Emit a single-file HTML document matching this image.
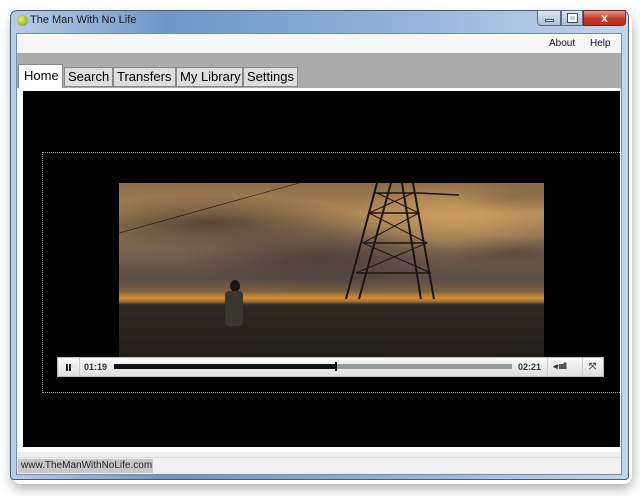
<!DOCTYPE html>
<html><head><style>
*{margin:0;padding:0;box-sizing:border-box}
body{width:640px;height:496px;background:#fff;position:relative;overflow:hidden;font-family:"Liberation Sans",sans-serif}
.abs{position:absolute}
</style></head><body>
<div class="abs" style="left:12px;top:14px;width:620px;height:470px;border-radius:8px;box-shadow:0 4px 12px rgba(0,0,0,0.35)"></div>
<div class="abs" style="left:10px;top:10px;width:619px;height:470px;border-radius:7px 7px 4px 4px;border:1px solid #4a5a70;background:linear-gradient(90deg,#b8cde6 0%,#6f96c8 25%,#8fb0d8 60%,#c2d5ea 100%)"></div>
<div class="abs" style="left:30px;top:14px;font-size:11px;color:#1a1a1a">The Man With No Life</div>
<div class="abs" style="left:17px;top:15px;width:11px;height:11px;border-radius:50%;background:radial-gradient(circle at 40% 40%,#e8f060,#6a9a10)"></div>
<div class="abs" style="left:537px;top:10px;width:24px;height:16px;border:1px solid #5a6d88;border-radius:0 0 0 4px;background:linear-gradient(#dbe6f3,#a9bdd8)"><div class="abs" style="left:7px;top:8px;width:9px;height:3px;background:#fff;border:1px solid #445"></div></div>
<div class="abs" style="left:561px;top:10px;width:22px;height:16px;border:1px solid #5a6d88;background:linear-gradient(#dbe6f3,#a9bdd8)"><div class="abs" style="left:6px;top:3px;width:9px;height:8px;border:2px solid #fff;outline:1px solid #445"></div></div>
<div class="abs" style="left:583px;top:10px;width:43px;height:16px;border:1px solid #6a2a20;border-radius:0 0 4px 0;background:linear-gradient(#e89a88,#c8402a 50%,#b82a18);color:#fff;font-size:12px;font-weight:bold;text-align:center;line-height:14px">x</div>
<div class="abs" style="left:16px;top:33px;width:606px;height:442px;background:#efefef;border:1px solid #7a8aa0"></div>
<div class="abs" style="left:17px;top:34px;width:604px;height:19px;background:#f7f7f7;font-size:10px;color:#111"><span class="abs" style="left:532px;top:4px">About</span><span class="abs" style="left:573px;top:4px">Help</span></div>
<div class="abs" style="left:17px;top:53px;width:604px;height:35px;background:#ababab"></div>
<div class="abs" style="left:18px;top:64px;width:45px;height:25px;background:#fff;border:1px solid #888;border-bottom:none;font-size:13px;padding:3px 0 0 5px">Home</div>
<div class="abs" style="left:64px;top:67px;width:49px;height:20px;background:#dedede;border:1px solid #888;font-size:13px;padding:1px 0 0 3px">Search</div>
<div class="abs" style="left:113px;top:67px;width:63px;height:20px;background:#dedede;border:1px solid #888;font-size:13px;padding:1px 0 0 3px">Transfers</div>
<div class="abs" style="left:176px;top:67px;width:67px;height:20px;background:#dedede;border:1px solid #888;font-size:13px;padding:1px 0 0 3px">My Library</div>
<div class="abs" style="left:243px;top:67px;width:55px;height:20px;background:#dedede;border:1px solid #888;font-size:13px;padding:1px 0 0 3px">Settings</div>
<div class="abs" style="left:17px;top:88px;width:604px;height:364px;background:#fff"></div>
<div class="abs" style="left:23px;top:91px;width:597px;height:356px;background:#000"></div>
<div class="abs" style="left:42px;top:152px;width:580px;height:241px;border:1px dotted #aaa"></div>
<div class="abs" style="left:119px;top:183px;width:425px;height:174px;overflow:hidden;background:linear-gradient(#8a6a48 0%,#b08a58 18%,#7a6450 38%,#5a4e48 55%,#7a6040 62%,#d09030 66%,#a87030 68%,#2e2a22 70%,#221e18 100%)">
<div class="abs" style="left:0;top:0;width:425px;height:116px;background:radial-gradient(ellipse 160px 28px at 90px 40px,rgba(60,48,45,.75),transparent),radial-gradient(ellipse 140px 35px at 200px 75px,rgba(55,45,45,.6),transparent),radial-gradient(ellipse 110px 40px at 340px 35px,rgba(225,175,95,.6),transparent),radial-gradient(ellipse 80px 18px at 390px 70px,rgba(80,60,50,.6),transparent),radial-gradient(ellipse 60px 15px at 390px 15px,rgba(90,70,55,.5),transparent)"></div>
<svg class="abs" style="left:0;top:0" width="425" height="174" stroke="#1a1412" fill="none" stroke-width="2">
<path d="M227 116 L258 0 M315 116 L294 0 M240 116 L272 0 M302 116 L283 0"/>
<path d="M250 30 L300 30 M244 60 L308 60 M237 90 L312 90 M255 10 L300 10 L340 12" stroke-width="1.5"/>
<path d="M258 10 L300 30 L244 60 L312 90 M294 10 L250 30 L308 60 L237 90" stroke-width="1"/>
<path d="M0 50 L180 0" stroke-width=".6"/>
<ellipse cx="116" cy="103" rx="5" ry="6" fill="#1a1412" stroke="none"/>
<rect x="106" y="108" width="18" height="35" rx="4" fill="#3a3630" stroke="none"/>
</svg>
</div>
<div class="abs" style="left:57px;top:357px;width:547px;height:20px;background:linear-gradient(#fafafa,#dedede);border:1px solid #bbb;font-size:9px;font-weight:bold;color:#333">
<div class="abs" style="left:8px;top:6px;width:2px;height:7px;background:#222"></div><div class="abs" style="left:11px;top:6px;width:2px;height:7px;background:#222"></div>
<div class="abs" style="left:21px;top:0;width:1px;height:18px;background:#ccc"></div>
<span class="abs" style="left:26px;top:4px">01:19</span>
<div class="abs" style="left:56px;top:6px;width:398px;height:5px;background:#999"></div>
<div class="abs" style="left:56px;top:6px;width:222px;height:5px;background:#111"></div>
<div class="abs" style="left:277px;top:4px;width:2px;height:9px;background:#111"></div>
<span class="abs" style="left:460px;top:4px">02:21</span>
<div class="abs" style="left:489px;top:0;width:1px;height:18px;background:#ccc"></div>
<span class="abs" style="left:495px;top:3px;font-size:9px;letter-spacing:-1px">◂·ıııll</span>
<div class="abs" style="left:524px;top:0;width:1px;height:18px;background:#ccc"></div>
<span class="abs" style="left:531px;top:3px;font-size:9px">⤧</span>
</div>
<div class="abs" style="left:17px;top:457px;width:604px;height:17px;background:#f0f0f0;border-top:1px solid #ddd"></div>
<div class="abs" style="left:18px;top:459px;width:135px;height:14px;background:#c8c8c8;font-size:10px;color:#222;padding:1px 0 0 3px">www.TheManWithNoLife.com</div>
</body></html>
